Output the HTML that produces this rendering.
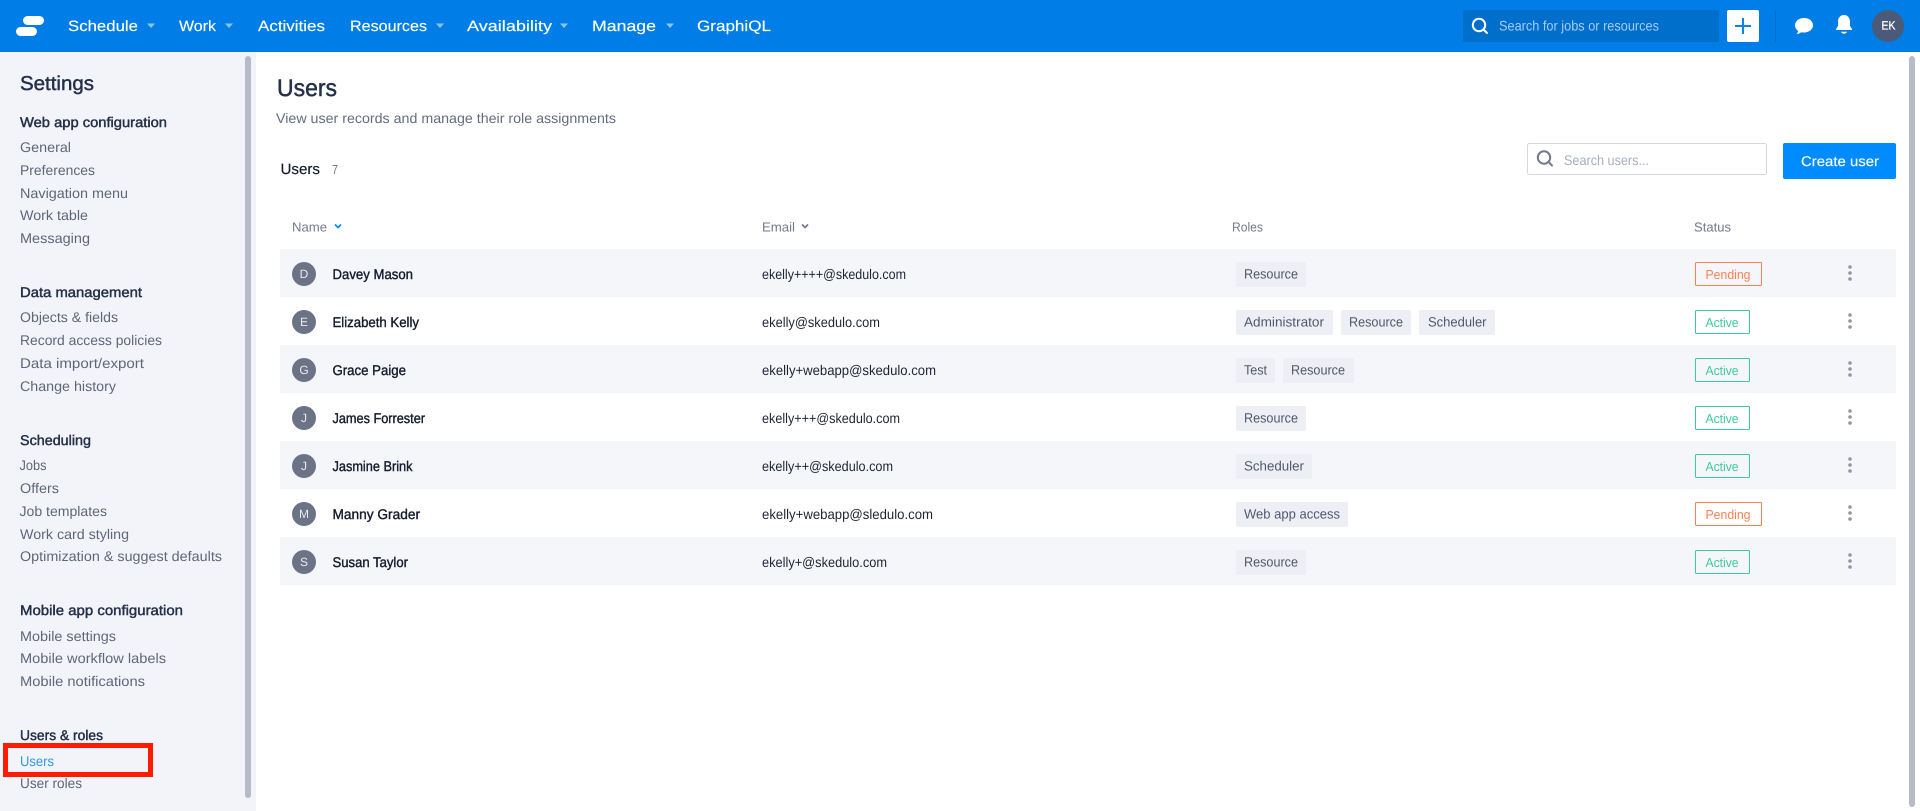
<!DOCTYPE html>
<html lang="en"><head><meta charset="utf-8"><title>Users</title>
<style>
html,body{margin:0;padding:0;width:1920px;height:811px;overflow:hidden;background:#fff}
svg{display:block}
text{font-family:"Liberation Sans",sans-serif;font-size:14px;text-rendering:geometricPrecision}
.nav{font-size:15px;fill:#fff;stroke:#fff;stroke-width:.15}
.h{fill:#243049;stroke:#243049;stroke-width:.45}
.l{fill:#5f6679}
.th{fill:#737a8e;font-size:13px}
.n{fill:#141c2e;stroke:#141c2e;stroke-width:.4}
.e{fill:#1e2433}
.r{fill:#50586d;font-size:13.5px}
.av{fill:#fff;fill-opacity:.85;font-size:12px;text-anchor:middle}
.p{fill:#ff7f50;font-size:13px}
.a{fill:#3ccb9b;font-size:13px}
.chip{fill:#eeeff4}
.sp{fill:none;stroke:#ff7f50;stroke-width:1}
.sa{fill:none;stroke:#3ccb9b;stroke-width:1}
.dot{fill:#9096a8}
</style></head><body>
<svg xmlns="http://www.w3.org/2000/svg" width="1920" height="811" viewBox="0 0 1920 811">
<rect width="1920" height="811" fill="#fff"/>
<!-- sidebar -->
<rect x="0" y="52" width="256" height="759" fill="#f3f4f9"/>
<rect x="245" y="56" width="6" height="742" rx="3" fill="#b7bac8"/>
<rect x="1909" y="56" width="6" height="751" rx="3" fill="#b7bac8"/>
<!-- header -->
<rect width="1920" height="52" fill="#007de6"/>
<rect x="23" y="16" width="21" height="9" rx="4.5" fill="#fff"/>
<rect x="16" y="27" width="21" height="9" rx="4.5" fill="#fff"/>
<text class="nav" x="68" y="31" textLength="70" lengthAdjust="spacingAndGlyphs">Schedule</text>
<path d="M147 23.5h8l-4 4.500z" fill="#8fc4f2"/>
<text class="nav" x="179" y="31" textLength="37" lengthAdjust="spacingAndGlyphs">Work</text>
<path d="M225 23.5h8l-4 4.500z" fill="#8fc4f2"/>
<text class="nav" x="258" y="31" textLength="67" lengthAdjust="spacingAndGlyphs">Activities</text>
<text class="nav" x="350" y="31" textLength="77" lengthAdjust="spacingAndGlyphs">Resources</text>
<path d="M436 23.5h8l-4 4.500z" fill="#8fc4f2"/>
<text class="nav" x="467" y="31" textLength="85" lengthAdjust="spacingAndGlyphs">Availability</text>
<path d="M560 23.5h8l-4 4.500z" fill="#8fc4f2"/>
<text class="nav" x="592" y="31" textLength="64" lengthAdjust="spacingAndGlyphs">Manage</text>
<path d="M666 23.5h8l-4 4.500z" fill="#8fc4f2"/>
<text class="nav" x="697" y="31" textLength="74" lengthAdjust="spacingAndGlyphs">GraphiQL</text>
<rect x="1463" y="10" width="256" height="32" rx="2" fill="#006ecb"/>
<circle cx="1479" cy="25" r="6.200" fill="none" stroke="#fff" stroke-width="2"/>
<path d="M1483.5 29.5l3.500 3.500" stroke="#fff" stroke-width="2" stroke-linecap="round"/>
<text x="1499" y="30.5" textLength="160" lengthAdjust="spacingAndGlyphs" fill="#a4cdf3">Search for jobs or resources</text>
<rect x="1727" y="10" width="32" height="32" rx="2" fill="#fff"/>
<path d="M1743 18v16M1735 26h16" stroke="#0a84e8" stroke-width="2"/>
<rect x="1775" y="10" width="1" height="32" fill="#006ecb"/>
<path d="M1804 18c5 0 9 3 9 7.300s-4 7.200-9 7.200c-1 0-2-.1-2.800-.3-1.200 1-2.800 1.600-4.700 1.800 .9-1 1.500-2 1.700-3.100-2.100-1.300-3.200-3.300-3.200-5.600 0-4.300 4-7.300 9-7.300z" fill="#fff"/>
<path d="M1844 15c3.800 0 6 3 6 6.500v4.500l2 3v1h-16v-1l2-3v-4.500c0-3.500 2.200-6.500 6-6.500z" fill="#fff"/>
<path d="M1841 31.800h6c-.3 1.200-1.500 1.900-3 1.900s-2.700-.7-3-1.900z" fill="#fff"/>
<circle cx="1888" cy="26" r="16" fill="#4a5a78"/>
<text x="1881.500" y="29.500" textLength="14" lengthAdjust="spacingAndGlyphs" style="font-size:12px" fill="#fff" stroke="#fff" stroke-width=".25">EK</text>
<!-- sidebar text -->
<text x="20" y="90" textLength="74" lengthAdjust="spacingAndGlyphs" style="font-size:20px" class="h">Settings</text>
<text class="h" x="20" y="127" textLength="147" lengthAdjust="spacingAndGlyphs">Web app configuration</text>
<text class="l" x="20" y="152" textLength="51" lengthAdjust="spacingAndGlyphs">General</text>
<text class="l" x="20" y="175" textLength="75" lengthAdjust="spacingAndGlyphs">Preferences</text>
<text class="l" x="20" y="198" textLength="108" lengthAdjust="spacingAndGlyphs">Navigation menu</text>
<text class="l" x="20" y="220" textLength="68" lengthAdjust="spacingAndGlyphs">Work table</text>
<text class="l" x="20" y="243" textLength="70" lengthAdjust="spacingAndGlyphs">Messaging</text>
<text class="h" x="20" y="297" textLength="122" lengthAdjust="spacingAndGlyphs">Data management</text>
<text class="l" x="20" y="322" textLength="98" lengthAdjust="spacingAndGlyphs">Objects &amp; fields</text>
<text class="l" x="20" y="345" textLength="142" lengthAdjust="spacingAndGlyphs">Record access policies</text>
<text class="l" x="20" y="368" textLength="124" lengthAdjust="spacingAndGlyphs">Data import/export</text>
<text class="l" x="20" y="391" textLength="96" lengthAdjust="spacingAndGlyphs">Change history</text>
<text class="h" x="20" y="445" textLength="71" lengthAdjust="spacingAndGlyphs">Scheduling</text>
<text class="l" x="19.500" y="470" textLength="27" lengthAdjust="spacingAndGlyphs">Jobs</text>
<text class="l" x="20" y="493" textLength="39" lengthAdjust="spacingAndGlyphs">Offers</text>
<text class="l" x="19.500" y="516" textLength="87.500" lengthAdjust="spacingAndGlyphs">Job templates</text>
<text class="l" x="20" y="539" textLength="109" lengthAdjust="spacingAndGlyphs">Work card styling</text>
<text class="l" x="20" y="561" textLength="202" lengthAdjust="spacingAndGlyphs">Optimization &amp; suggest defaults</text>
<text class="h" x="20" y="615" textLength="163" lengthAdjust="spacingAndGlyphs">Mobile app configuration</text>
<text class="l" x="20" y="641" textLength="96" lengthAdjust="spacingAndGlyphs">Mobile settings</text>
<text class="l" x="20" y="663" textLength="146" lengthAdjust="spacingAndGlyphs">Mobile workflow labels</text>
<text class="l" x="20" y="686" textLength="125" lengthAdjust="spacingAndGlyphs">Mobile notifications</text>
<text class="h" x="20" y="740" textLength="83" lengthAdjust="spacingAndGlyphs">Users &amp; roles</text>
<text x="20" y="766" textLength="34" lengthAdjust="spacingAndGlyphs" fill="#2e96f5">Users</text>
<text class="l" x="20" y="788" textLength="62" lengthAdjust="spacingAndGlyphs">User roles</text>
<rect x="5.500" y="745.500" width="145" height="29" fill="none" stroke="#ff1a00" stroke-width="5"/>
<!-- main heading -->
<text x="277" y="96" textLength="60" lengthAdjust="spacingAndGlyphs" style="font-size:24px" fill="#243049" stroke="#243049" stroke-width=".5">Users</text>
<text x="276" y="123" textLength="340" lengthAdjust="spacingAndGlyphs" fill="#656c80">View user records and manage their role assignments</text>
<text x="280.500" y="174" textLength="39.500" lengthAdjust="spacingAndGlyphs" style="font-size:15px" fill="#141c2e" stroke="#141c2e" stroke-width=".2">Users</text>
<text x="332" y="174" textLength="6" lengthAdjust="spacingAndGlyphs" style="font-size:13px" fill="#737a8e">7</text>
<rect x="1527.500" y="143.500" width="239" height="31" rx="2" fill="#fff" stroke="#d5d7e0"/>
<circle cx="1544" cy="157.500" r="6.200" fill="none" stroke="#737a8e" stroke-width="2"/>
<path d="M1548.500 162l3.500 3.500" stroke="#737a8e" stroke-width="2" stroke-linecap="round"/>
<text x="1564" y="165" textLength="85" lengthAdjust="spacingAndGlyphs" fill="#a9aec0">Search users...</text>
<rect x="1783" y="143" width="113" height="36" rx="2" fill="#008cff"/>
<text x="1801" y="166" textLength="78" lengthAdjust="spacingAndGlyphs" fill="#fff" stroke="#fff" stroke-width=".15">Create user</text>
<!-- table header -->
<text class="th" x="292" y="231.500" textLength="35" lengthAdjust="spacingAndGlyphs">Name</text>
<path d="M335 224.500l3 3 3-3" fill="none" stroke="#008cff" stroke-width="1.700"/>
<text class="th" x="762" y="231.500" textLength="33" lengthAdjust="spacingAndGlyphs">Email</text>
<path d="M802 224.500l3 3 3-3" fill="none" stroke="#737a8e" stroke-width="1.700"/>
<text class="th" x="1232" y="231.500" textLength="31" lengthAdjust="spacingAndGlyphs">Roles</text>
<text class="th" x="1694" y="231.500" textLength="37" lengthAdjust="spacingAndGlyphs">Status</text>
<!-- rows -->
<rect x="280" y="249" width="1616" height="48" fill="#f5f6fa"/>
<rect x="280" y="345" width="1616" height="48" fill="#f5f6fa"/>
<rect x="280" y="441" width="1616" height="48" fill="#f5f6fa"/>
<rect x="280" y="537" width="1616" height="48" fill="#f5f6fa"/>
<g fill="#6b7387">
<circle cx="304" cy="274" r="12"/><circle cx="304" cy="322" r="12"/><circle cx="304" cy="370" r="12"/><circle cx="304" cy="418" r="12"/><circle cx="304" cy="466" r="12"/><circle cx="304" cy="514" r="12"/><circle cx="304" cy="562" r="12"/>
</g>
<text class="av" x="304" y="278">D</text><text class="av" x="304" y="326">E</text><text class="av" x="304" y="374">G</text><text class="av" x="304" y="422">J</text><text class="av" x="304" y="470">J</text><text class="av" x="304" y="518">M</text><text class="av" x="304" y="566">S</text>
<text class="n" x="332.500" y="279" textLength="80.500" lengthAdjust="spacingAndGlyphs">Davey Mason</text>
<text class="n" x="332.500" y="327" textLength="86.500" lengthAdjust="spacingAndGlyphs">Elizabeth Kelly</text>
<text class="n" x="332.500" y="375" textLength="73.500" lengthAdjust="spacingAndGlyphs">Grace Paige</text>
<text class="n" x="332.500" y="423" textLength="92.500" lengthAdjust="spacingAndGlyphs">James Forrester</text>
<text class="n" x="332.500" y="471" textLength="80" lengthAdjust="spacingAndGlyphs">Jasmine Brink</text>
<text class="n" x="332.500" y="519" textLength="87.500" lengthAdjust="spacingAndGlyphs">Manny Grader</text>
<text class="n" x="332.500" y="567" textLength="75.500" lengthAdjust="spacingAndGlyphs">Susan Taylor</text>
<text class="e" x="762" y="279" textLength="144" lengthAdjust="spacingAndGlyphs">ekelly++++@skedulo.com</text>
<text class="e" x="762" y="327" textLength="118" lengthAdjust="spacingAndGlyphs">ekelly@skedulo.com</text>
<text class="e" x="762" y="375" textLength="174" lengthAdjust="spacingAndGlyphs">ekelly+webapp@skedulo.com</text>
<text class="e" x="762" y="423" textLength="138" lengthAdjust="spacingAndGlyphs">ekelly+++@skedulo.com</text>
<text class="e" x="762" y="471" textLength="131" lengthAdjust="spacingAndGlyphs">ekelly++@skedulo.com</text>
<text class="e" x="762" y="519" textLength="171" lengthAdjust="spacingAndGlyphs">ekelly+webapp@sledulo.com</text>
<text class="e" x="762" y="567" textLength="125" lengthAdjust="spacingAndGlyphs">ekelly+@skedulo.com</text>
<!-- role chips -->
<rect class="chip" x="1236" y="262" width="70" height="25" rx="2"/>
<text class="r" x="1244" y="278.500" textLength="54" lengthAdjust="spacingAndGlyphs">Resource</text>
<rect class="chip" x="1236" y="310" width="97" height="25" rx="2"/>
<text class="r" x="1244" y="326.500" textLength="80" lengthAdjust="spacingAndGlyphs">Administrator</text>
<rect class="chip" x="1341" y="310" width="70" height="25" rx="2"/>
<text class="r" x="1349" y="326.500" textLength="54" lengthAdjust="spacingAndGlyphs">Resource</text>
<rect class="chip" x="1419" y="310" width="76" height="25" rx="2"/>
<text class="r" x="1428" y="326.500" textLength="58.500" lengthAdjust="spacingAndGlyphs">Scheduler</text>
<rect class="chip" x="1236" y="358" width="39" height="25" rx="2"/>
<text class="r" x="1244" y="374.500" textLength="23" lengthAdjust="spacingAndGlyphs">Test</text>
<rect class="chip" x="1283" y="358" width="71" height="25" rx="2"/>
<text class="r" x="1291" y="374.500" textLength="54" lengthAdjust="spacingAndGlyphs">Resource</text>
<rect class="chip" x="1236" y="406" width="70" height="25" rx="2"/>
<text class="r" x="1244" y="422.500" textLength="54" lengthAdjust="spacingAndGlyphs">Resource</text>
<rect class="chip" x="1236" y="454" width="76" height="25" rx="2"/>
<text class="r" x="1244" y="470.500" textLength="60" lengthAdjust="spacingAndGlyphs">Scheduler</text>
<rect class="chip" x="1236" y="502" width="112" height="25" rx="2"/>
<text class="r" x="1244" y="518.500" textLength="96" lengthAdjust="spacingAndGlyphs">Web app access</text>
<rect class="chip" x="1236" y="550" width="70" height="25" rx="2"/>
<text class="r" x="1244" y="566.500" textLength="54" lengthAdjust="spacingAndGlyphs">Resource</text>
<!-- status -->
<rect class="sp" x="1695.500" y="262.500" width="66" height="23" rx="1"/>
<text class="p" x="1705.500" y="279" textLength="45" lengthAdjust="spacingAndGlyphs">Pending</text>
<rect class="sa" x="1695.500" y="310.500" width="54" height="23" rx="1"/>
<text class="a" x="1705.500" y="327" textLength="33" lengthAdjust="spacingAndGlyphs">Active</text>
<rect class="sa" x="1695.500" y="358.500" width="54" height="23" rx="1"/>
<text class="a" x="1705.500" y="375" textLength="33" lengthAdjust="spacingAndGlyphs">Active</text>
<rect class="sa" x="1695.500" y="406.500" width="54" height="23" rx="1"/>
<text class="a" x="1705.500" y="423" textLength="33" lengthAdjust="spacingAndGlyphs">Active</text>
<rect class="sa" x="1695.500" y="454.500" width="54" height="23" rx="1"/>
<text class="a" x="1705.500" y="471" textLength="33" lengthAdjust="spacingAndGlyphs">Active</text>
<rect class="sp" x="1695.500" y="502.500" width="66" height="23" rx="1"/>
<text class="p" x="1705.500" y="519" textLength="45" lengthAdjust="spacingAndGlyphs">Pending</text>
<rect class="sa" x="1695.500" y="550.500" width="54" height="23" rx="1"/>
<text class="a" x="1705.500" y="567" textLength="33" lengthAdjust="spacingAndGlyphs">Active</text>
<!-- kebabs -->
<g class="dot">
<circle cx="1850" cy="267" r="1.800"/><circle cx="1850" cy="273" r="1.800"/><circle cx="1850" cy="279" r="1.800"/>
<circle cx="1850" cy="315" r="1.800"/><circle cx="1850" cy="321" r="1.800"/><circle cx="1850" cy="327" r="1.800"/>
<circle cx="1850" cy="363" r="1.800"/><circle cx="1850" cy="369" r="1.800"/><circle cx="1850" cy="375" r="1.800"/>
<circle cx="1850" cy="411" r="1.800"/><circle cx="1850" cy="417" r="1.800"/><circle cx="1850" cy="423" r="1.800"/>
<circle cx="1850" cy="459" r="1.800"/><circle cx="1850" cy="465" r="1.800"/><circle cx="1850" cy="471" r="1.800"/>
<circle cx="1850" cy="507" r="1.800"/><circle cx="1850" cy="513" r="1.800"/><circle cx="1850" cy="519" r="1.800"/>
<circle cx="1850" cy="555" r="1.800"/><circle cx="1850" cy="561" r="1.800"/><circle cx="1850" cy="567" r="1.800"/>
</g>
</svg>
</body></html>
